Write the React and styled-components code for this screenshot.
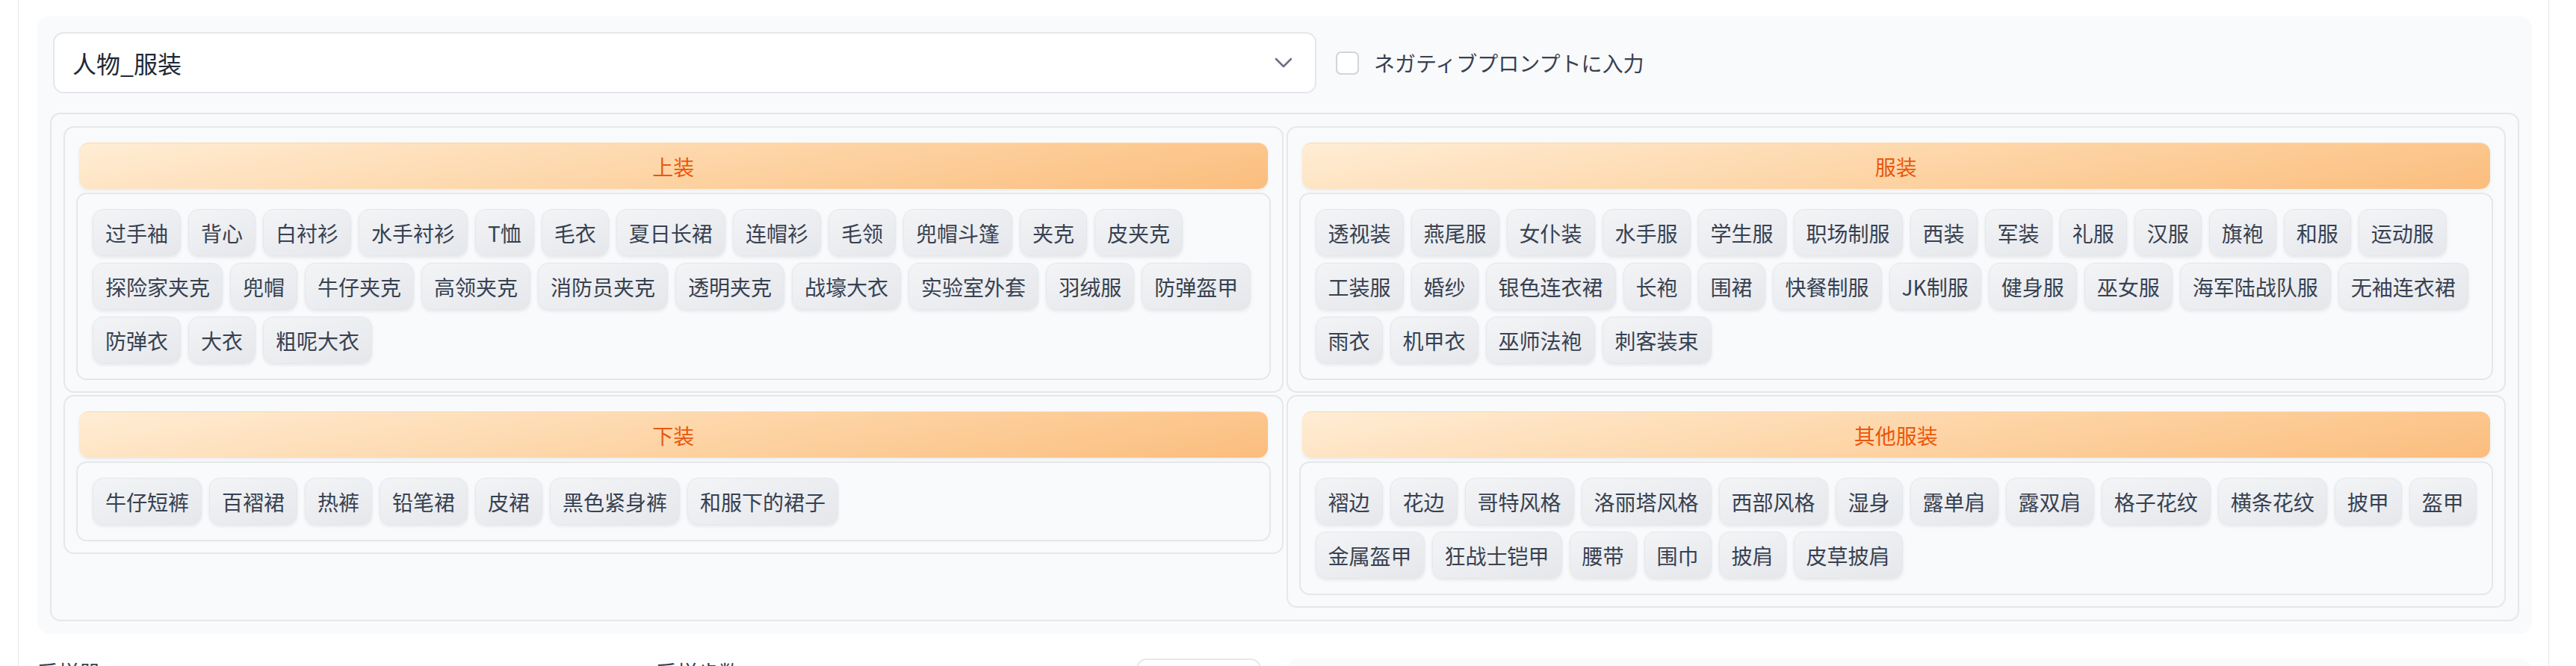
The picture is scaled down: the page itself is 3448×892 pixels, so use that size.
import React from 'react';
import styled, { createGlobalStyle } from 'styled-components';

const GlobalStyle = createGlobalStyle`
  html, body {
    margin: 0;
    padding: 0;
    background: #ffffff;
  }
  body {
    font-family: "Noto Sans CJK SC", "Noto Sans", sans-serif;
    color: #374151;
    overflow: hidden;
  }
`;

const Page = styled.div`
  margin-left: 24px;
  width: 3388px;
  height: 892px;
  border-left: 1px solid #e5e7eb;
  border-right: 1px solid #e5e7eb;
  padding: 22px 0 0 25px;
  box-sizing: border-box;
  overflow: hidden;
`;

const Panel = styled.div`
  width: 3339px;
  box-sizing: border-box;
  background: #f9fafb;
  border-radius: 16px;
  padding: 17px;
`;

const TopRow = styled.div`
  display: flex;
  align-items: center;
  gap: 26px;
  padding: 4px 4px 0;
  margin-bottom: 26px;
`;

const Select = styled.div`
  width: 1691px;
  height: 82px;
  box-sizing: border-box;
  background: #ffffff;
  border: 2px solid #e5e7eb;
  border-radius: 14px;
  display: flex;
  align-items: center;
  justify-content: space-between;
  padding: 0 30px 0 24px;
  font-size: 32px;
  color: #1f2937;
`;

const CheckLabel = styled.label`
  display: flex;
  align-items: center;
  gap: 20px;
  font-size: 28px;
  color: #374151;
`;

const Box = styled.span`
  width: 31px;
  height: 31px;
  box-sizing: border-box;
  border: 2px solid #d1d5db;
  border-radius: 7px;
  background: #ffffff;
`;

const Container = styled.div`
  border: 2px solid #e5e7eb;
  border-radius: 14px;
  padding: 16px;
  display: grid;
  grid-template-columns: 1fr 1fr;
  column-gap: 4px;
  row-gap: 3px;
  align-items: start;
`;

const Card = styled.div`
  border: 2px solid #e5e7eb;
  border-radius: 14px;
  padding: 15px;
`;

const Header = styled.div`
  margin: 5px 4px;
  height: 62px;
  box-sizing: border-box;
  border-radius: 13px;
  border-top: 1px solid #fed7aa;
  background: linear-gradient(170deg, #ffedd5 0%, #fdd3a3 55%, #fbbd7d 100%);
  box-shadow: 0 2px 4px rgba(0, 0, 0, 0.07);
  display: flex;
  align-items: center;
  justify-content: center;
  font-size: 28px;
  color: #ea580c;
`;

const TagBox = styled.div`
  border: 2px solid #e5e7eb;
  border-radius: 14px;
  padding: 20px 12px 20px 20px;
  display: flex;
  flex-wrap: wrap;
  column-gap: 10px;
  row-gap: 9px;
`;

const Tag = styled.span`
  height: 63px;
  box-sizing: border-box;
  padding: 0 16px;
  border: 1px solid #e5e7eb;
  border-radius: 14px;
  background: linear-gradient(160deg, #f3f4f6 0%, #e5e7eb 100%);
  box-shadow: 0 2px 4px rgba(0, 0, 0, 0.08);
  display: flex;
  align-items: center;
  font-size: 28px;
  line-height: 1;
  color: #374151;
  white-space: nowrap;
`;

const BottomRow = styled.div`
  display: flex;
  gap: 34px;
  margin-top: 33px;
  width: 3339px;
`;

const Field = styled.div`
  width: ${(p) => p.$w}px;
  display: flex;
  justify-content: space-between;
  align-items: flex-start;
  flex-shrink: 0;
`;

const FieldLabel = styled.span`
  font-size: 28px;
  line-height: 1;
  margin-top: 4px;
  color: #374151;
`;

const NumberBox = styled.div`
  width: 167px;
  height: 60px;
  box-sizing: border-box;
  border: 2px solid #e5e7eb;
  border-radius: 14px;
  background: #ffffff;
`;

const WideBox = styled.div`
  flex: 1;
  height: 60px;
  background: #f9fafb;
  border-radius: 16px;
`;

const groups = [
  {
    title: '上装',
    tags: ['过手袖', '背心', '白衬衫', '水手衬衫', 'T恤', '毛衣', '夏日长裙', '连帽衫', '毛领', '兜帽斗篷', '夹克', '皮夹克',
      '探险家夹克', '兜帽', '牛仔夹克', '高领夹克', '消防员夹克', '透明夹克', '战壕大衣', '实验室外套', '羽绒服', '防弹盔甲',
      '防弹衣', '大衣', '粗呢大衣'],
  },
  {
    title: '服装',
    tags: ['透视装', '燕尾服', '女仆装', '水手服', '学生服', '职场制服', '西装', '军装', '礼服', '汉服', '旗袍', '和服', '运动服',
      '工装服', '婚纱', '银色连衣裙', '长袍', '围裙', '快餐制服', 'JK制服', '健身服', '巫女服', '海军陆战队服', '无袖连衣裙',
      '雨衣', '机甲衣', '巫师法袍', '刺客装束'],
  },
  {
    title: '下装',
    tags: ['牛仔短裤', '百褶裙', '热裤', '铅笔裙', '皮裙', '黑色紧身裤', '和服下的裙子'],
  },
  {
    title: '其他服装',
    tags: ['褶边', '花边', '哥特风格', '洛丽塔风格', '西部风格', '湿身', '露单肩', '露双肩', '格子花纹', '横条花纹', '披甲', '盔甲',
      '金属盔甲', '狂战士铠甲', '腰带', '围巾', '披肩', '皮草披肩'],
  },
];

function Chevron() {
  return (
    <svg width="24" height="14" viewBox="0 0 24 14" fill="none">
      <polyline points="2,2 12,12 22,2" stroke="#6b7280" strokeWidth="2.6" strokeLinecap="round" strokeLinejoin="round" />
    </svg>
  );
}

export default function App() {
  return (
    <>
      <GlobalStyle />
      <Page>
        <Panel>
          <TopRow>
            <Select>
              <span>人物_服装</span>
              <Chevron />
            </Select>
            <CheckLabel>
              <Box />
              ネガティブプロンプトに入力
            </CheckLabel>
          </TopRow>
          <Container>
            {groups.map((g) => (
              <Card key={g.title}>
                <Header>{g.title}</Header>
                <TagBox>
                  {g.tags.map((t) => (
                    <Tag key={t}>{t}</Tag>
                  ))}
                </TagBox>
              </Card>
            ))}
          </Container>
        </Panel>
        <BottomRow>
          <Field $w={794}>
            <FieldLabel>采样器</FieldLabel>
          </Field>
          <Field $w={810}>
            <FieldLabel>采样步数</FieldLabel>
            <NumberBox />
          </Field>
          <WideBox />
        </BottomRow>
      </Page>
    </>
  );
}
